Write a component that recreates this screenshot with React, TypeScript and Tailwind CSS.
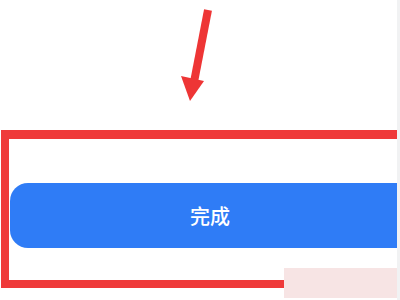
import React from "react";

export default function App() {
  return (
    <div className="relative flex h-[300px] w-[400px] overflow-hidden bg-white">
      <div className="flex w-[397px] flex-col">
        <svg width="397" height="130" viewBox="0 0 397 130" className="block">
          <line x1="208" y1="10" x2="194" y2="82" stroke="#ee3535" strokeWidth="8" />
          <polygon points="181,76 204,81 190,101" fill="#ee3535" />
        </svg>
        <div className="ml-[1px] h-[158px] w-[396px] border-t-[9px] border-l-[8px] border-b-[8px] border-[#ef3a3a] pt-[44px] pl-[1px]">
          <div
            className="flex h-[65px] w-full items-center justify-center rounded-l-[18px] bg-[#2f7cf6] pl-[13px] text-[20px] font-medium text-white"
            style={{ fontFamily: '"Noto Sans CJK SC", "Noto Sans", sans-serif' }}
          >
            完成
          </div>
        </div>
      </div>
      <div className="w-[3px] bg-[#f1f2f3]" />
      <div className="absolute left-[284px] top-[268px] h-[30px] w-[113px] bg-[#f7e4e4]" />
    </div>
  );
}
